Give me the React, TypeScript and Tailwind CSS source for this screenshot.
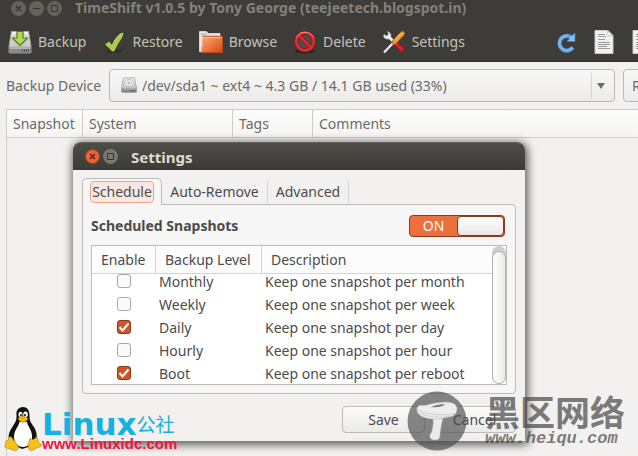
import React, { useLayoutEffect, useRef, useState } from 'react';

const snapshotLevels = [
  { name: 'Monthly', description: 'Keep one snapshot per month', enabled: false },
  { name: 'Weekly', description: 'Keep one snapshot per week', enabled: false },
  { name: 'Daily', description: 'Keep one snapshot per day', enabled: true },
  { name: 'Hourly', description: 'Keep one snapshot per hour', enabled: false },
  { name: 'Boot', description: 'Keep one snapshot per reboot', enabled: true },
];

function DriveIcon({ className, arrow }: { className: string; arrow?: boolean }) {
  return (
    <svg viewBox="0 0 24 24" className={className} aria-hidden="true">
      <defs>
        <linearGradient id="drive" x1="0" y1="0" x2="0" y2="1">
          <stop offset="0" stopColor="#f4f4f4" />
          <stop offset="1" stopColor="#c4c4c4" />
        </linearGradient>
      </defs>
      <path d="M3.500 1h17l3 16v5q0 1.500-1.500 1.500H2Q.5 23.500.5 22v-5z" fill="#8f8f8f" />
      <path d="M3.500 1.500h17l2.500 15.500H1z" fill="url(#drive)" stroke="#a9a9a9" />
      <ellipse cx="12" cy="9" rx="7" ry="5.500" fill="#e6e6e6" stroke="#b5b5b5" />
      <circle cx="12" cy="9" r="2" fill="#bdbdbd" />
      <path d="M1 17h22v4.500q0 1-1 1H2q-1 0-1-1z" fill="#8a8a8a" />
      <path d="M2 18h20" stroke="#ddd" />
      <path d="M14 20.500h7" stroke="#444" strokeWidth="2" strokeDasharray="1 1" />
      {arrow && <path d="M9 1.500h6v6.500h4.500L12 15.500 4.500 8H9z" fill="#b5d957" stroke="#4d7d12" strokeWidth="1.200" />}
    </svg>
  );
}

function CheckIcon() {
  return (
    <svg viewBox="0 0 22 24" className="h-6 w-6" aria-hidden="true">
      <ellipse cx="11" cy="21" rx="9" ry="2" fill="#2c2b28" opacity=".6" />
      <path d="M2.500 14.500 6 12l3 3.500Q12 8 17 4l3-1-1 4Q14.500 13 11 21H9Q6.500 17.500 2.500 14.500z" fill="#a6cf3c" stroke="#d5ec8c" strokeWidth=".6" />
    </svg>
  );
}

function FolderIcon() {
  return (
    <svg viewBox="0 0 24 24" className="h-6 w-6" aria-hidden="true">
      <defs>
        <linearGradient id="folder" x1="0" y1="0" x2="1" y2="1">
          <stop offset="0" stopColor="#f6b07a" />
          <stop offset="1" stopColor="#dd4410" />
        </linearGradient>
      </defs>
      <path d="M.5 1.500h7l1.500 2h12v3H4v15H.5z" fill="#e9e6e4" stroke="#fff" strokeWidth=".6" />
      <path d="M2 3h5l1.500 2H20v2H2z" fill="#c9c5c2" />
      <path d="M4.500 6.500h19v16h-21z" fill="url(#folder)" stroke="#c94a1c" strokeWidth=".7" />
      <path d="M5.500 7.500h17" stroke="#fbd0b0" strokeWidth=".8" />
      <path d="M2.500 22.500 4.500 7" stroke="#f3b08d" strokeWidth="1" />
    </svg>
  );
}

function DeleteIcon() {
  return (
    <svg viewBox="0 0 24 24" className="h-6 w-6" aria-hidden="true">
      <ellipse cx="12" cy="21" rx="10" ry="2.500" fill="#22211f" opacity=".7" />
      <circle cx="12" cy="11.500" r="8.800" fill="#504e4a" stroke="#8d1015" strokeWidth="4" />
      <path d="m6 5.500 12 12" stroke="#8d1015" strokeWidth="4" />
      <circle cx="12" cy="11.500" r="8.800" fill="none" stroke="#cf3338" strokeWidth="2.800" />
      <path d="m6 5.500 12 12" stroke="#cf3338" strokeWidth="2.600" />
      <path d="M3.500 7.500a9.500 9.500 0 0 1 17 0" fill="none" stroke="#ef8f8c" strokeWidth="1" />
    </svg>
  );
}

function ToolsIcon() {
  return (
    <svg viewBox="0 0 24 24" className="h-6 w-6" aria-hidden="true">
      <path d="m13 13 7 6.500" stroke="#96101a" strokeWidth="5" strokeLinecap="round" />
      <path d="m13 13 7 6.500" stroke="#d8232f" strokeWidth="3.200" strokeLinecap="round" />
      <path d="M5 1.500 6.500 3.500 5 6 2 4.500Q.5 6.500 3 8.500q2 1 4 .5l4.500 4.500 2-2L9 7Q9.500 2 5 1.500z" fill="#eee" stroke="#999" strokeWidth=".5" />
      <path d="M2 22.500 12 12" stroke="#ececec" strokeWidth="2.200" />
      <path d="m12.500 12 8-8.500" stroke="#9c5d12" strokeWidth="5" strokeLinecap="round" />
      <path d="m12.500 12 8-8.500" stroke="#eda03c" strokeWidth="3.600" strokeLinecap="round" />
      <path d="m13 9.500 6-6.500" stroke="#f8cf8a" strokeWidth="1" />
    </svg>
  );
}

function ReloadIcon() {
  return (
    <svg viewBox="0 0 20 22" className="h-[22px] w-5" aria-hidden="true">
      <path d="M17 16.500A7.300 7.300 0 1 1 14.500 6" fill="none" stroke="#3f7cbf" strokeWidth="4.500" />
      <path d="M16.500 16.500A7.300 7.300 0 1 1 14.500 6" fill="none" stroke="#7fb2e6" strokeWidth="3" />
      <path d="M19 2v8.500h-8.500l3-2.500-1.500-3 4-.5z" fill="#8dbcea" stroke="#3f7cbf" strokeWidth=".8" />
    </svg>
  );
}

function DocumentIcon() {
  return (
    <svg viewBox="0 0 20 24" className="h-6 w-5 shrink-0" aria-hidden="true">
      <path d="M1 .500h13l5 5v18H1z" fill="#f1f1f1" stroke="#c9c9c9" />
      <path d="M13 .500 14 5.500l5 .5z" fill="#fff" stroke="#aaa" strokeWidth=".6" />
      <path d="M4 4.500h7M4 6.500h8M4 9.500h7M4 12.500h12M4 14.500h12M4 16.500h9M4 18.500h12" stroke="#9a9a9a" />
    </svg>
  );
}

function Tux() {
  return (
    <svg viewBox="0 0 38 46" className="h-[46px] w-[38px]" aria-hidden="true">
      <path d="M19 1c-5 0-7 4-6.500 8 .3 5-1 7-3.500 11C5.500 25 3 30 6 37l12 6 13-4c3-6 2-13-1-18-3-4-4.500-6-4.500-11 0-5-1.500-9-6.500-9z" fill="#111" />
      <path d="M15.500 16c-1 5-5.500 8-5.500 15 0 6 4 10 9 10s9.500-4 9-11c0-6-4-9-5-14z" fill="#fff" />
      <ellipse cx="16.500" cy="8.500" rx="2" ry="2.800" fill="#fff" />
      <ellipse cx="21.500" cy="8.500" rx="2.300" ry="3" fill="#fff" />
      <circle cx="17" cy="9" r="1" fill="#111" />
      <circle cx="21" cy="9" r="1.100" fill="#111" />
      <path d="M14 12.500q5-5 10 0-1 3-5 4-4-1-5-4z" fill="#f5b800" stroke="#a87400" strokeWidth=".5" />
      <path d="M5 31c2-1 3 0 4.500 3l4 5c2 3 0 6-3 5.500-3-1-5-2-8-2.500-2.500-.5-1.500-3-1-5 0-3 2-2 3-3 0-1-.5-2.500.5-3z" fill="#f6c015" stroke="#9b7300" strokeWidth=".5" />
      <path d="M26 32c1 2 5 2 6-1 2 0 1.500 3 2.500 5 1 1 3 2 3 3 0 2-3 2-5.500 3.500-2 1.500-5 3-7 1-2-3 0-7 1-11.500z" fill="#f6c015" stroke="#9b7300" strokeWidth=".5" />
    </svg>
  );
}

function Mushroom() {
  return (
    <svg viewBox="0 0 60 60" className="h-[60px] w-[60px]" aria-hidden="true">
      <circle cx="30" cy="30" r="29.500" fill="#4a4a4a" opacity=".66" />
      <g opacity=".92">
        <path d="M26 27q1 11-3 17c-1 4 3 5.500 6 5 4-.5 4-3 4-6q1-9 3-16z" fill="#f4f4f4" stroke="#bbb" strokeWidth=".5" />
        <path d="M10 17c1-4 6-2 10-3 6-2 13-3 19-3 7 0 12 3 11 8-1 7-8 7-13 8-7 2-14 1-20-.5-5-2-8-5-7-9.500z" fill="#f6f6f6" stroke="#aaa" strokeWidth=".5" />
        <path d="M10 19q14 7 37 4" fill="none" stroke="#bbb" strokeWidth=".6" />
        <path d="M12 22q12 6 32 3" fill="none" stroke="#bbb" strokeDasharray="1 1" />
        <path d="M24 16q7-3.500 14-2.500-5 3.500-14 2.500z" fill="#777" />
      </g>
    </svg>
  );
}

function ToolButton({ icon, label }: { icon: React.ReactNode; label: string }) {
  return (
    <button className="flex shrink-0 items-center gap-[6px] text-[#c5c2b8]">
      {icon}
      {label}
    </button>
  );
}

function MainWindow() {
  return (
    <div className="flex min-h-screen flex-col text-[#6a6a68]">
      <header className="bg-[#3d3c38]">
        <div className="flex h-4 items-center gap-[3px] pl-[11px]">
          <button aria-label="Close" className="grid size-[15px] place-items-center rounded-full bg-[#64625d] text-[#34332f]">
            <svg viewBox="0 0 7 7" className="size-[7px]"><path d="m1 1 5 5M6 1 1 6" stroke="currentColor" strokeWidth="1.300" /></svg>
          </button>
          <button aria-label="Minimize" className="grid size-[15px] place-items-center rounded-full bg-[#64625d] text-[#34332f]">
            <svg viewBox="0 0 7 7" className="size-[7px]"><path d="M0 3.500h7" stroke="currentColor" /></svg>
          </button>
          <button aria-label="Maximize" className="grid size-[15px] place-items-center rounded-full bg-[#64625d] text-[#34332f]">
            <svg viewBox="0 0 7 7" className="size-[7px]"><path d="M.5.5h6v6h-6z" fill="none" stroke="currentColor" /></svg>
          </button>
          <h1 className="pl-[10px] leading-4 font-bold whitespace-nowrap text-[#84817a]">TimeShift v1.0.5 by Tony George (teejeetech.blogspot.in)</h1>
        </div>
        <nav className="flex h-[46px] items-center overflow-hidden border-b border-[#2c2b28] pt-[6px] pl-2">
          <div className="flex items-center gap-4">
            <ToolButton icon={<DriveIcon className="size-6" arrow />} label="Backup" />
            <ToolButton icon={<CheckIcon />} label="Restore" />
            <ToolButton icon={<FolderIcon />} label="Browse" />
            <ToolButton icon={<DeleteIcon />} label="Delete" />
            <ToolButton icon={<ToolsIcon />} label="Settings" />
          </div>
          <div className="-mr-[14px] ml-auto flex shrink-0 items-center gap-[18px]">
            <button aria-label="Reload"><ReloadIcon /></button>
            <button aria-label="Report"><DocumentIcon /></button>
            <button aria-label="Log"><DocumentIcon /></button>
          </div>
        </nav>
      </header>

      <div className="flex items-center py-[7px] pl-[6px]">
        <label htmlFor="device" className="w-[103px] shrink-0">Backup Device</label>
        <div className="relative flex-1">
          <select
            id="device"
            className="h-[33px] w-full appearance-none rounded border border-[#b9b7b4] bg-linear-to-b from-[#f8f8f7] to-[#ecebea] pl-8"
          >
            <option>/dev/sda1 ~ ext4 ~ 4.3 GB / 14.1 GB used (33%)</option>
          </select>
          <DriveIcon className="pointer-events-none absolute top-2 left-3 size-4" />
          <div className="pointer-events-none absolute inset-y-1 right-0 grid w-6 place-items-center border-l border-[#d5d3d1]">
            <svg viewBox="0 0 8 6" className="mr-[6px] h-[6px] w-2"><path d="M0 0h8L4 6z" fill="#6b6b69" /></svg>
          </div>
        </div>
        <div className="ml-2 w-[15px] overflow-hidden">
          <button className="h-[33px] rounded border border-[#b9b7b4] bg-linear-to-b from-[#f8f8f7] to-[#ecebea] px-2">Refresh</button>
        </div>
      </div>

      <div className="ml-[6px] flex-1 border-t border-l border-[#cfcdcb]">
        <table className="w-full table-fixed border-separate border-spacing-0 text-left">
          <thead>
            <tr className="h-7 bg-linear-to-b from-[#fcfcfb] to-[#f5f4f3]">
              <th className="w-[76px] border-r border-b border-[#cfcdcb] pl-[6px] font-normal">Snapshot</th>
              <th className="w-[150px] border-r border-b border-[#cfcdcb] pl-[6px] font-normal">System</th>
              <th className="w-20 border-r border-b border-[#cfcdcb] pl-[6px] font-normal">Tags</th>
              <th className="border-b border-[#cfcdcb] pl-[6px] font-normal">Comments</th>
            </tr>
          </thead>
        </table>
      </div>
    </div>
  );
}

function LevelTable() {
  const scroller = useRef<HTMLDivElement>(null);

  useLayoutEffect(() => {
    if (scroller.current) scroller.current.scrollTop = scroller.current.scrollHeight;
  }, []);

  return (
    <div className="flex h-[140px] border border-[#bdbbb8] bg-white">
      <div ref={scroller} className="flex-1 overflow-y-auto [scrollbar-width:none]">
        <table className="w-full table-fixed border-separate border-spacing-0 text-left">
          <thead className="sticky top-0 z-10 bg-[#fcfcfc]">
            <tr className="h-7">
              <th className="w-16 border-r border-b border-[#d6d4d2] pl-[9px] font-normal">Enable</th>
              <th className="w-[106px] border-r border-b border-[#d6d4d2] pl-[9px] font-normal">Backup Level</th>
              <th className="border-b border-[#d6d4d2] pl-[9px] font-normal">Description</th>
            </tr>
          </thead>
          <tbody>
            {snapshotLevels.map((level) => (
              <tr key={level.name} className="h-[23px]">
                <td>
                  <div className="grid place-items-center">
                    <input
                      type="checkbox"
                      defaultChecked={level.enabled}
                      aria-label={level.name}
                      className="peer col-start-1 row-start-1 size-[14px] appearance-none rounded-[3px] border border-[#aaa8a6] bg-[#fafafa] checked:border-[#8f3a1c] checked:bg-[#cf5527]"
                    />
                    <svg viewBox="0 0 12 12" className="pointer-events-none invisible z-1 col-start-1 row-start-1 size-3 peer-checked:visible">
                      <path d="m1.500 6 3 3.500 6-7" fill="none" stroke="#fff" strokeWidth="2" />
                    </svg>
                  </div>
                </td>
                <td className="pt-[2px] pl-[3px] leading-5">{level.name}</td>
                <td className="pt-[2px] pl-[3px] leading-5 whitespace-nowrap">{level.description}</td>
              </tr>
            ))}
          </tbody>
        </table>
      </div>
      <div className="w-[14px] rounded-lg bg-[#cfcdcb] pt-[5px]">
        <div className="h-full rounded-full border border-[#b5b3b0] bg-linear-to-r from-white to-[#ebeae9]" />
      </div>
    </div>
  );
}

function SettingsDialog() {
  const [on, setOn] = useState(true);

  return (
    <section
      role="dialog"
      aria-labelledby="settings-title"
      className="absolute top-[142px] left-[73px] w-[452px] rounded-t-lg bg-[#f2f1f0] text-[#4c4c4c] shadow-[1px_2px_9px_2px_rgba(0,0,0,0.6)]"
    >
      <div className="flex h-7 items-center gap-[3px] rounded-t-lg border-t border-[#66645c] bg-linear-to-b from-[#4d4c45] to-[#3c3b37] pl-3">
        <button aria-label="Close" className="grid size-[15px] place-items-center rounded-full border border-[#a53c18] bg-[#ed6338] text-[#522010]">
          <svg viewBox="0 0 7 7" className="size-[7px]"><path d="m1 1 5 5M6 1 1 6" stroke="currentColor" strokeWidth="1.300" /></svg>
        </button>
        <button aria-label="Maximize" className="grid size-[15px] place-items-center rounded-full bg-[#7a7870] text-[#33322e]">
          <svg viewBox="0 0 7 7" className="size-[7px]"><path d="M.5.5h6v6h-6z" fill="none" stroke="currentColor" /></svg>
        </button>
        <h2 id="settings-title" className="pl-[10px] text-[15px] font-bold text-[#dfdbd2]">Settings</h2>
      </div>

      <div className="px-[9px] py-2">
        <div role="tablist" className="flex items-end">
          <button role="tab" aria-selected="true" className="z-1 -mb-px flex h-[27px] w-20 justify-center rounded-t-[5px] border border-b-0 border-[#bdbbb8] bg-[#f6f6f6] pt-[2px]">
            <span className="h-[22px] rounded border border-[#f0a58a] bg-[#f9e8e2] px-px leading-5">Schedule</span>
          </button>
          <button role="tab" aria-selected="false" className="h-6 w-[106px] border-r border-[#d9d7d5]">Auto-Remove</button>
          <button role="tab" aria-selected="false" className="h-6 w-[81px] border-r border-[#d9d7d5]">Advanced</button>
        </div>
        <div className="rounded-b rounded-tr border border-[#bdbbb8] bg-[#f6f6f6] px-2 pb-2">
          <div className="flex h-10 items-center justify-between pt-px pr-[2px]">
            <label htmlFor="schedule" className="font-bold">Scheduled Snapshots</label>
            <button
              id="schedule"
              role="switch"
              aria-checked={on}
              onClick={() => setOn(!on)}
              className="flex h-[22px] w-24 rounded border border-[#8f3a1c] bg-[#ec6f3d] text-white"
            >
              <span className="flex-1 leading-5">ON</span>
              <span className="h-5 w-[47px] rounded border border-[#8f3a1c] bg-linear-to-b from-white to-[#e9e8e7]" />
            </button>
          </div>
          <LevelTable />
        </div>
        <div className="mt-3 flex justify-end gap-2">
          <button className="h-[27px] w-[83px] rounded border border-[#bdbbb8] bg-linear-to-b from-[#fcfcfc] to-[#ebeae9]">Save</button>
          <button className="h-[27px] w-[83px] rounded border border-[#bdbbb8] bg-linear-to-b from-[#fcfcfc] to-[#ebeae9]">Cancel</button>
        </div>
      </div>
    </section>
  );
}

export default function App() {
  return (
    <div className="relative min-h-screen overflow-hidden bg-[#f2f1f0] font-['Noto_Sans','Noto_Sans_CJK_SC',sans-serif] text-[14px] leading-5">
      <MainWindow />
      <SettingsDialog />

      <div className="pointer-events-none absolute bottom-1 left-1 flex items-end">
        <Tux />
        <div className="whitespace-nowrap">
          <div className="flex items-end text-[#14b2e2]">
            <span className="font-['DejaVu_Sans',sans-serif] text-[31px] leading-6 font-bold">Linux</span>
            <span className="font-['Noto_Sans_CJK_SC',sans-serif] text-[19px] leading-6">公社</span>
          </div>
          <div className="font-['Liberation_Sans',sans-serif] text-[15px] leading-4 font-bold text-[#f3123f]">www.Linuxidc.com</div>
        </div>
      </div>

      <div className="pointer-events-none absolute right-[13px] bottom-[5px] flex items-center gap-[18px]">
        <Mushroom />
        <div className="whitespace-nowrap text-[#444]/70">
          <div className="font-['Noto_Sans_CJK_SC',sans-serif] text-[35px] leading-9 font-bold">黑区网络</div>
          <div className="font-['Liberation_Mono',monospace] text-[17px] leading-5 font-bold italic">www.heiqu.com</div>
        </div>
      </div>
    </div>
  );
}
